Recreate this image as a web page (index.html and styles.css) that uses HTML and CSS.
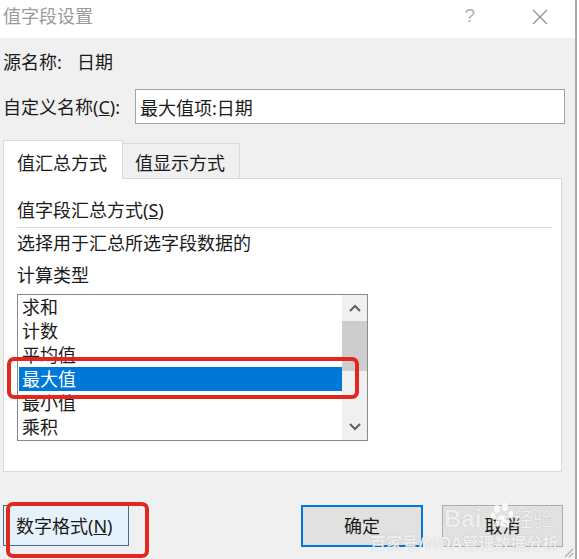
FILE: index.html
```html
<!DOCTYPE html>
<html lang="zh-CN">
<head>
  <meta charset="UTF-8" />
  <meta name="viewport" content="width=device-width, initial-scale=1.0" />
  <title>值字段设置</title>
  <link rel="stylesheet" href="styles.css">
</head>
<body>
  <div class="dialog">
    <div class="titlebar">
      <span class="title">值字段设置</span>
      <span class="help">?</span>
      <svg class="close" width="16" height="16" viewBox="0 0 16 16">
        <path d="M1 1 L15 15 M15 1 L1 15" stroke="#8a8a8a" stroke-width="1.1" fill="none" />
      </svg>
    </div>

    <div class="content">
      <div class="row source">
        <span class="source-label">源名称:</span>
        <span>日期</span>
      </div>

      <div class="row custom">
        <label class="custom-label">自定义名称(<u>C</u>):</label>
        <input class="name-input" type="text" value="最大值项:日期" />
      </div>

      <div class="tabs">
        <div class="tab active">值汇总方式</div>
        <div class="tab">值显示方式</div>
      </div>

      <div class="panel">
        <div class="panel-heading">值字段汇总方式(<u>S</u>)</div>
        <div class="separator"></div>
        <div class="desc first">选择用于汇总所选字段数据的</div>
        <div class="desc">计算类型</div>

        <div class="listbox">
          <ul class="items">
            <li>求和</li>
            <li>计数</li>
            <li>平均值</li>
            <li class="selected">最大值</li>
            <li>最小值</li>
            <li>乘积</li>
          </ul>
          <div class="scrollbar">
            <svg class="arrow" width="12" height="8" viewBox="0 0 12 8">
              <path d="M1 7 L6 2 L11 7" stroke="#606060" stroke-width="2" fill="none" />
            </svg>
            <div class="thumb"></div>
            <div class="track"></div>
            <svg class="arrow" width="12" height="8" viewBox="0 0 12 8">
              <path d="M1 1 L6 6 L11 1" stroke="#606060" stroke-width="2" fill="none" />
            </svg>
          </div>
        </div>
      </div>

      <div class="buttons">
        <button class="btn format">数字格式(<u>N</u>)</button>
        <button class="btn ok">确定</button>
        <button class="btn cancel">取消</button>
      </div>
    </div>

    <!-- annotations from the screenshot -->
    <div class="mark mark-list"></div>
    <div class="mark mark-format"></div>

    <div class="watermark">
      <span class="wm-bai">Bai</span>
      <svg class="wm-paw" width="26" height="26" viewBox="0 0 26 26">
        <g fill="rgba(255,255,255,0.8)">
          <ellipse cx="7" cy="6" rx="3" ry="4" />
          <ellipse cx="15" cy="4" rx="3" ry="4" />
          <ellipse cx="3" cy="13" rx="2.5" ry="3.2" />
          <ellipse cx="21" cy="11" rx="2.5" ry="3.2" />
          <path d="M5 22 C5 15 10 12 12 12 C15 12 19 16 19 21 C19 25 14 23 12 23 C9 23 5 25 5 22 Z" />
        </g>
      </svg>
      <span class="wm-jy">经验</span>
      <span class="wm-line">百家号/MDA管理数据分析</span>
    </div>

    <svg class="grip" width="12" height="12" viewBox="0 0 12 12">
      <path d="M11 3 L3 11 M11 7 L7 11 M11 11 L11 11" stroke="#b0b0b0" stroke-width="1.2" />
    </svg>
  </div>
</body>
</html>
```

FILE: styles.css
```css
:root {
  --face: #f0f0f0;
  --line: #d9d9d9;
  --text: #1b1b1b;
  --accent: #0078d7;
  --mark: #e2271f;
}
body {
  margin: 0;
  background: #fff;
  font-family: "Noto Sans", "Noto Sans CJK SC", sans-serif;
  font-size: 18px;
  color: var(--text);
}
.dialog {
  position: relative;
  width: 575px;
  height: 559px;
  border-right: 2px solid #ababab;
  overflow: hidden;
}
.titlebar {
  height: 38px;
  background: #fff;
  display: flex;
  align-items: center;
  padding-left: 3px;
}
.title {
  color: #9a9a9a;
  line-height: 24px;
  margin-top: -6px;
}
.help {
  margin-left: auto;
  color: #b0b0b0;
  font-family: "Liberation Sans", sans-serif;
  font-size: 19px;
  font-weight: 300;
  margin-top: -6px;
}
.close {
  margin-left: 57px;
  margin-right: 27px;
  margin-top: -4px;
}
.content {
  background: var(--face);
  height: 521px;
  overflow: hidden;
}
.row {
  display: flex;
  align-items: center;
  padding-left: 3px;
  line-height: 24px;
}
.source {
  margin-top: 12px;
}
.source-label {
  width: 74px;
}
.custom {
  margin-top: 15px;
}
.custom-label {
  width: 132px;
}
.name-input {
  box-sizing: border-box;
  width: 430px;
  height: 35px;
  margin: 0;
  border: 1px solid #a3a3a3;
  padding: 0 4px;
  font: inherit;
  color: var(--text);
  background: #fff;
  outline: none;
}
.tabs {
  display: flex;
  align-items: flex-end;
  margin-top: 16px;
  padding-left: 3px;
}
.tab {
  box-sizing: border-box;
  height: 35px;
  width: 117px;
  padding: 0 0 3px 12px;
  display: flex;
  align-items: flex-end;
  line-height: 24px;
  border: 1px solid var(--line);
  border-bottom: none;
  border-left: none;
  background: var(--face);
}
.tab.active {
  position: relative;
  z-index: 1;
  width: 120px;
  height: 39px;
  margin-bottom: -1px;
  padding: 0 0 4px 13px;
  border-left: 1px solid var(--line);
  background: #fff;
}
.panel {
  box-sizing: border-box;
  margin-left: 3px;
  width: 559px;
  height: 294px;
  border: 1px solid var(--line);
  background: #fff;
  padding: 19px 13px 0 13px;
  line-height: 24px;
}
.separator {
  height: 1px;
  margin: 5px -4px 0 0;
  background: #dadada;
}
.desc.first {
  margin-top: 3px;
}
.desc {
  margin-top: 8px;
}
.listbox {
  box-sizing: border-box;
  margin-top: 7px;
  width: 351px;
  height: 147px;
  border: 1px solid #8a8a8a;
  display: flex;
}
.items {
  flex: 1;
  list-style: none;
  margin: 0;
  padding: 0;
}
.items li {
  height: 24px;
  line-height: 24px;
  padding-left: 4px;
}
.items li.selected {
  margin-left: 1px;
  padding-left: 3px;
  background: var(--accent);
  color: #fff;
}
.scrollbar {
  width: 25px;
  background: var(--face);
  display: flex;
  flex-direction: column;
  align-items: center;
}
.arrow {
  margin: 9px 0;
}
.thumb {
  width: 25px;
  height: 50px;
  background: #cdcdcd;
}
.track {
  flex: 1;
}
.buttons {
  display: flex;
  margin-top: 33px;
  padding: 0 12px 0 3px;
}
.btn {
  box-sizing: border-box;
  height: 42px;
  margin: 0;
  font: inherit;
  color: var(--text);
  background: #e1e1e1;
  border: 1px solid #adadad;
  padding: 0;
  line-height: 24px;
}
.btn.format {
  width: 126px;
  height: 41px;
  text-align: left;
  padding-left: 12px;
  background: #e5f1fb;
  border-color: #3f6f99;
}
.btn.ok {
  margin-left: auto;
  width: 122px;
  border: 2px solid var(--accent);
}
.btn.cancel {
  margin-left: 19px;
  width: 121px;
}
.mark {
  position: absolute;
  box-sizing: border-box;
  border: 4px solid var(--mark);
  border-radius: 7px;
}
.mark-list {
  left: 7px;
  top: 357px;
  width: 352px;
  height: 42px;
}
.mark-format {
  left: 6px;
  top: 502px;
  width: 143px;
  height: 56px;
}
.watermark {
  position: absolute;
  left: 0;
  top: 0;
  width: 100%;
  height: 100%;
  pointer-events: none;
  color: rgba(255, 255, 255, 0.82);
  text-shadow: 0 0 1px rgba(0, 0, 0, 0.25);
  line-height: 20px;
}
.wm-bai {
  position: absolute;
  left: 444px;
  top: 509px;
  font-family: "Liberation Sans", sans-serif;
  font-weight: bold;
  font-size: 24px;
}
.wm-paw {
  position: absolute;
  left: 490px;
  top: 503px;
}
.wm-jy {
  position: absolute;
  left: 513px;
  top: 510px;
  font-size: 20px;
}
.wm-line {
  position: absolute;
  left: 370px;
  top: 533px;
  font-size: 16px;
  font-weight: bold;
  white-space: nowrap;
}
.grip {
  position: absolute;
  right: 1px;
  bottom: 1px;
}
```
